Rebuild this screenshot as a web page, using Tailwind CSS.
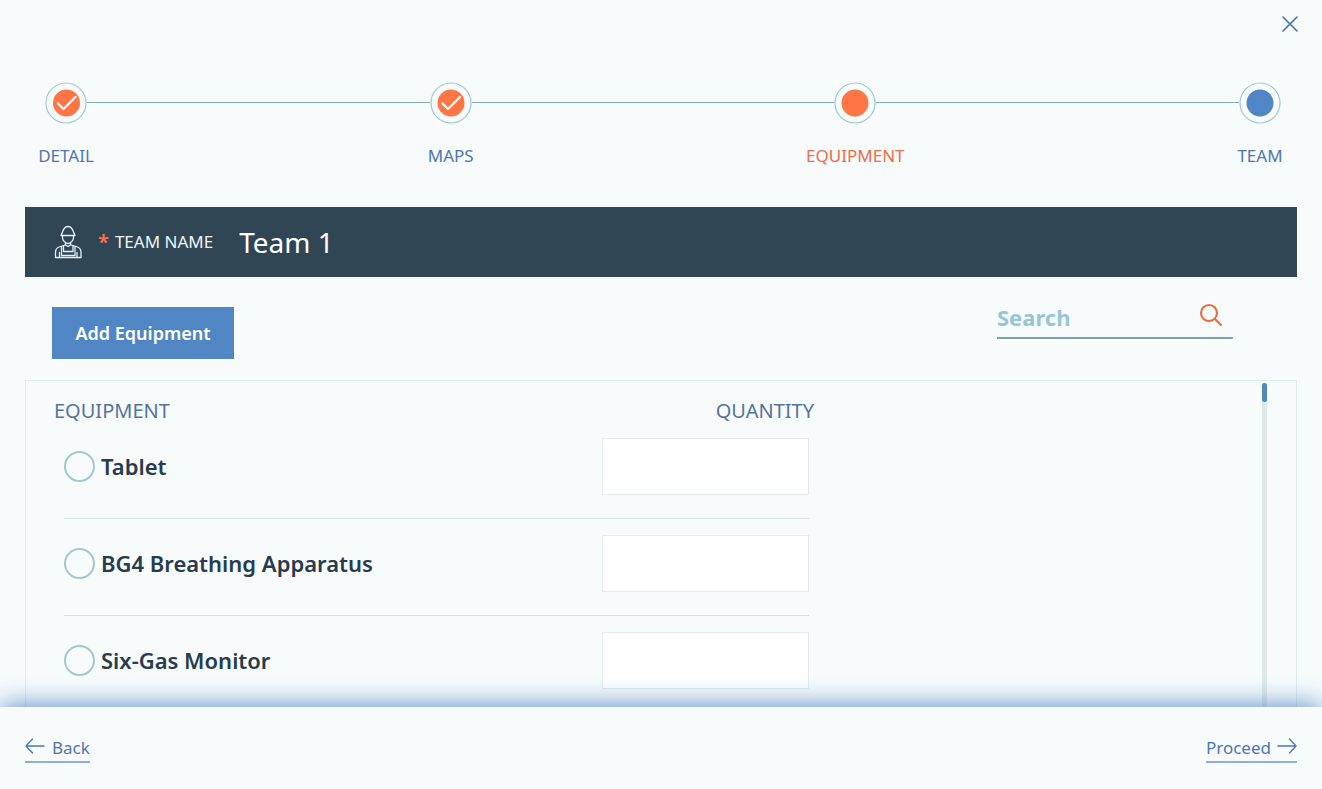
<!DOCTYPE html>
<html lang="en">
<head>
<meta charset="utf-8">
<meta name="viewport" content="width=device-width, initial-scale=1">
<title>Team equipment</title>
<script src="https://cdn.jsdelivr.net/npm/@tailwindcss/browser@4"></script>
</head>
<body class="flex h-screen flex-col overflow-hidden bg-[#f7fbfc] font-['Noto_Sans',sans-serif] text-[#4f76ae]">
  <header class="flex justify-end px-6 pt-4">
    <button type="button" aria-label="Close" class="h-4 w-4">
      <svg viewBox="0 0 16 16" class="h-4 w-4" fill="none" stroke="#4172b5" stroke-width="1.6" stroke-linecap="round"><path d="M1 1l14 14M15 1L1 15"/></svg>
    </button>
  </header>

  <nav aria-label="Progress" class="px-[41px] pt-[50px]">
    <ol class="flex items-start pl-1">
      <li class="flex w-[42px] flex-col items-center gap-5">
        <svg viewBox="0 0 42 42" class="h-[42px] w-[42px]" fill="none"><circle cx="21" cy="21" r="20" stroke="#9fc8d3" stroke-width="1.2"/><circle cx="21.500" cy="21" r="13.500" fill="#ff7545"/><path d="M13 21.500l5.500 5.500L30.500 15" stroke="#fff" stroke-width="2.2" stroke-linecap="round" stroke-linejoin="round"/></svg>
        <span class="text-[17px] leading-6">DETAIL</span>
      </li>
      <li aria-hidden="true" class="mt-5 h-px flex-[343] bg-[#86adba]"></li>
      <li class="flex w-[42px] flex-col items-center gap-5">
        <svg viewBox="0 0 42 42" class="h-[42px] w-[42px]" fill="none"><circle cx="21" cy="21" r="20" stroke="#9fc8d3" stroke-width="1.2"/><circle cx="21" cy="21" r="13.500" fill="#ff7545"/><path d="M12.500 21.500l5.500 5.500L30 15" stroke="#fff" stroke-width="2.2" stroke-linecap="round" stroke-linejoin="round"/></svg>
        <span class="text-[17px] leading-6">MAPS</span>
      </li>
      <li aria-hidden="true" class="mt-5 h-px flex-[363] bg-[#86adba]"></li>
      <li aria-current="step" class="flex w-[42px] flex-col items-center gap-5">
        <svg viewBox="0 0 42 42" class="h-[42px] w-[42px]" fill="none"><circle cx="21" cy="21" r="20" stroke="#9fc8d3" stroke-width="1.2"/><circle cx="21" cy="21" r="13.5" fill="#ff7545"/></svg>
        <span class="text-[17px] leading-6 text-[#ee6c4c]">EQUIPMENT</span>
      </li>
      <li aria-hidden="true" class="mt-5 h-px flex-[363] bg-[#86adba]"></li>
      <li class="flex w-[42px] flex-col items-center gap-5">
        <svg viewBox="0 0 42 42" class="h-[42px] w-[42px]" fill="none"><circle cx="21" cy="21" r="20" stroke="#9fc8d3" stroke-width="1.2"/><circle cx="21" cy="21" r="13.5" fill="#4f86c3"/></svg>
        <span class="text-[17px] leading-6">TEAM</span>
      </li>
    </ol>
  </nav>

  <main class="flex min-h-0 flex-1 flex-col overflow-hidden px-[25px] pt-[39px]">
    <div class="flex h-[70px] shrink-0 items-center bg-[#304655] pl-[29px] text-white">
      <svg viewBox="0 0 28 34" class="h-[34px] w-7 shrink-0" fill="none" stroke="#e4f0f5" stroke-width="1.3" stroke-linejoin="round" stroke-linecap="round"><path d="M7 10.500L8.500 7C9.500 4 11.500 1.500 14 1.500S18.500 4 19.500 7L21 10.500z"/><path d="M8.500 10.500v2c0 3 3 6 5.500 6s5.500-3 5.500-6v-2"/><path d="M11.500 17.500v2.500l2.500 1.500 2.500-1.500v-2.500"/><path d="M11.500 20L5 22C2.500 23 1.500 25 1.500 27.500V32.500H27V27.500C27 25 26 23 23.500 22L17 20"/><path d="M7.500 21.500V30.500h13.500v-9M9.500 21v5.500h9.500V21M5.500 27.500v5M23 27.500v5"/></svg>
      <label for="team" class="ml-4 flex items-center gap-[6px] text-[17px] text-[#eef5f8]"><span class="text-xl leading-6 font-semibold text-[#ff7050]">*</span>TEAM NAME</label>
      <input id="team" type="text" value="Team 1" class="ml-[26px] min-w-0 flex-1 bg-transparent text-[28px] leading-9 outline-none">
    </div>

    <div class="flex shrink-0 items-start justify-between pt-[30px] pr-16 pl-[27px]">
      <button type="button" class="h-[52px] w-[182px] bg-[#4f86c3] text-lg font-semibold text-white">Add Equipment</button>
      <div class="flex h-8 w-[236px] items-center border-b-2 border-[#7f9fae]">
        <input type="search" placeholder="Search" aria-label="Search" class="min-w-0 flex-1 bg-transparent pb-[10px] text-[22px] leading-8 font-bold outline-none placeholder:text-[#98c5d4]">
        <button type="button" aria-label="Run search" class="mr-[10px] mb-[14px] h-6 w-6"><svg viewBox="0 0 24 24" class="h-6 w-6" fill="none" stroke="#ee6a45" stroke-width="2.2" stroke-linecap="round"><circle cx="10" cy="10" r="8"/><path d="M16 16l6 6"/></svg></button>
      </div>
    </div>

    <section class="mt-[21px] flex min-h-0 flex-1 border border-b-0 border-[#e1eaed] pr-[29px] pl-7">
      <div class="min-w-0 flex-1 overflow-hidden">
        <table class="w-full max-w-[760px] table-fixed border-collapse text-left">
          <thead class="text-xl text-[#55749a]">
            <tr><th scope="col" class="pt-4 pb-[13px] font-normal leading-7">EQUIPMENT</th><th scope="col" class="w-[220px] pt-4 pb-[13px] text-right font-normal leading-7">QUANTITY</th></tr>
          </thead>
          <tbody class="text-[22px] font-semibold text-[#293b4c]">
            <tr>
              <td class="p-0 pl-[10px]"><div class="mb-4 border-b border-[#d5e0e4] pb-[23px]"><label class="flex h-[57px] items-center gap-[6px]"><input type="checkbox" class="h-[31px] w-[31px] appearance-none rounded-full border-2 border-[#a3c7d3]">Tablet</label></div></td>
              <td class="p-0 pr-[5px]"><div class="mb-4 border-b border-[#d5e0e4] pb-[23px]"><input type="text" aria-label="Tablet quantity" class="ml-auto block h-[57px] w-[207px] border border-[#e4ebed] bg-white px-4"></div></td>
            </tr>
            <tr>
              <td class="p-0 pl-[10px]"><div class="mb-4 border-b border-[#d5e0e4] pb-[23px]"><label class="flex h-[57px] items-center gap-[6px]"><input type="checkbox" class="h-[31px] w-[31px] appearance-none rounded-full border-2 border-[#a3c7d3]">BG4 Breathing Apparatus</label></div></td>
              <td class="p-0 pr-[5px]"><div class="mb-4 border-b border-[#d5e0e4] pb-[23px]"><input type="text" aria-label="BG4 Breathing Apparatus quantity" class="ml-auto block h-[57px] w-[207px] border border-[#e4ebed] bg-white px-4"></div></td>
            </tr>
            <tr>
              <td class="p-0 pl-[10px]"><label class="flex h-[57px] items-center gap-[6px]"><input type="checkbox" class="h-[31px] w-[31px] appearance-none rounded-full border-2 border-[#a3c7d3]">Six-Gas Monitor</label></td>
              <td class="p-0 pr-[5px]"><input type="text" aria-label="Six-Gas Monitor quantity" class="ml-auto block h-[57px] w-[207px] border border-[#e4ebed] bg-white px-4"></td>
            </tr>
          </tbody>
        </table>
      </div>
      <div aria-hidden="true" class="mt-[2px] w-[5px] bg-[#dfe9ea]"><div class="h-[19px] rounded-full bg-[#4f86c3]"></div></div>
    </section>
  </main>

  <footer class="z-10 flex h-[82px] shrink-0 items-center justify-between bg-[#f7fbfc] px-[25px] pt-[2px] text-[17px] shadow-[0_0_28px_#4f86c3]">
    <a href="#maps" class="flex h-7 items-center gap-[7px] border-b-2 border-[#8fb0d6]">
      <svg viewBox="0 0 20 16" class="mb-1 h-4 w-5" fill="none" stroke="#4b78b6" stroke-width="1.4" stroke-linecap="round" stroke-linejoin="round"><path d="M19 8H1M7.500 1L1 8l6.500 7"/></svg>Back</a>
    <a href="#team-step" class="flex h-7 items-center gap-[6px] border-b-2 border-[#8fb0d6]">Proceed
      <svg viewBox="0 0 20 16" class="mb-1 h-4 w-5" fill="none" stroke="#4b78b6" stroke-width="1.4" stroke-linecap="round" stroke-linejoin="round"><path d="M1 8h18M12.500 1L19 8l-6.500 7"/></svg></a>
  </footer>
</body>
</html>
